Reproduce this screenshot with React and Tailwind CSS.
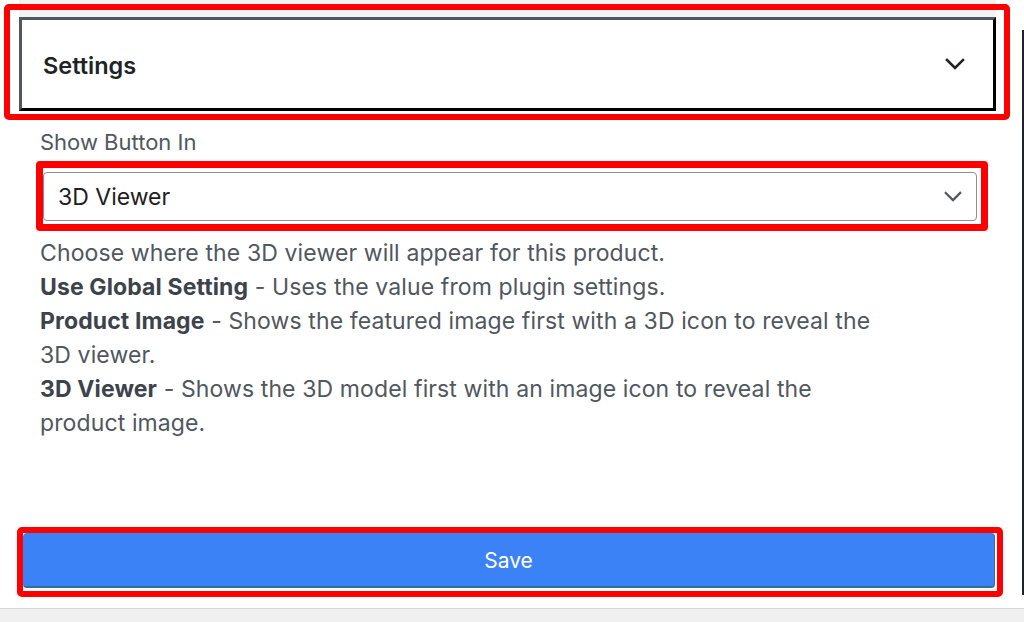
import React from 'react';

const Chevron = ({ className, strokeWidth }) => (
    <svg viewBox="0 0 20 12" className={className} fill="none" stroke="currentColor" strokeWidth={strokeWidth} strokeLinecap="square">
        <path d="M2 2 L10 10 L18 2" />
    </svg>
);

export default function App() {
    return (
        <div className="relative w-[1024px] h-[622px] bg-white flex flex-col overflow-hidden font-['Inter',sans-serif]">
            {/* strip from the panel above */}
            <div className="ml-[19px] w-[977px] h-[4px] bg-[#f3f3f4]" />

            {/* Settings header */}
            <div className="ml-[4px] w-[1006px] h-[116px] border-[6px] border-[#ff0000] rounded-[5px] pt-[7px] pl-[9px] pr-[8px] pb-[3px]">
                <div className="h-full flex items-center justify-between pl-[21px] pr-[28px] border-[3px] border-t-[#50575e] border-l-[#50575e] border-r-black border-b-black shadow-[0_-7px_0_0_#f3f3f4]">
                    <span className="pt-[3px] text-[23.5px] font-semibold text-[#1d2327]">Settings</span>
                    <Chevron className="w-[20px] h-[12px] text-[#1d2327]" strokeWidth={2.6} />
                </div>
            </div>

            {/* Field */}
            <label className="mt-[8px] px-[40px] text-[22px] leading-[28px] text-[#50575e]">Show Button In</label>

            <div className="ml-[36px] mt-[5px] w-[952px] h-[70px] border-[7px] border-[#ff0000] rounded-[4px] pt-[4px]">
                <div className="w-[934px] h-[49px] border border-[#8c8f94] rounded-[4px] flex items-center justify-between pl-[14px] pr-[14px]">
                    <span className="pt-[2px] text-[23px] text-[#1e1e1e]">3D Viewer</span>
                    <Chevron className="w-[18px] h-[11px] text-[#50575e]" strokeWidth={2.4} />
                </div>
            </div>

            <div className="mt-[5px] px-[40px] w-[930px] text-[23px] leading-[34px] tracking-[0.005em] text-[#50575e]">
                <p>Choose where the 3D viewer will appear for this product.</p>
                <p><strong className="font-bold text-[#3c434a]">Use Global Setting</strong> - Uses the value from plugin settings.</p>
                <p><strong className="font-bold text-[#3c434a]">Product Image</strong> - Shows the featured image first with a 3D icon to reveal the 3D viewer.</p>
                <p><strong className="font-bold text-[#3c434a]">3D Viewer</strong> - Shows the 3D model first with an image icon to reveal the product image.</p>
            </div>

            <div className="flex-1" />

            {/* Save */}
            <div className="ml-[17px] w-[986px] h-[70px] border-[6px] border-[#ff0000] rounded-[5px] pr-[2px] pb-[3px]">
                <button className="w-full h-full pt-[3px] bg-[#3b82f6] rounded-[4px] border-b-2 border-r border-[#2a6f9e] text-white text-[21px]">
                    Save
                </button>
            </div>

            <div className="mt-[11px] h-[14px] border-t border-[#d6d6d8] bg-[#f0f0f1]" />

            {/* edge of the window behind */}
            <div className="absolute right-0 top-[30px] w-[2px] h-[565px] bg-[#1d2327]" />
        </div>
    );
}
